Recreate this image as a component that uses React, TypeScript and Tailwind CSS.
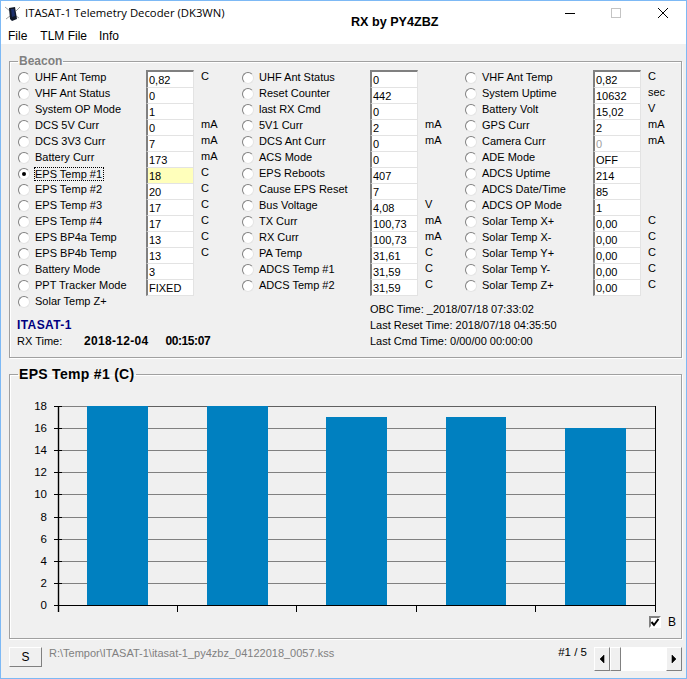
import React from "react";

type Row = { label: string; value: string; unit?: string; selected?: boolean; disabled?: boolean };

const col1: Row[] = [
  { label: "UHF Ant Temp", value: "0,82", unit: "C" },
  { label: "VHF Ant Status", value: "0" },
  { label: "System OP Mode", value: "1" },
  { label: "DCS 5V Curr", value: "0", unit: "mA" },
  { label: "DCS 3V3 Curr", value: "7", unit: "mA" },
  { label: "Battery Curr", value: "173", unit: "mA" },
  { label: "EPS Temp #1", value: "18", unit: "C", selected: true },
  { label: "EPS Temp #2", value: "20", unit: "C" },
  { label: "EPS Temp #3", value: "17", unit: "C" },
  { label: "EPS Temp #4", value: "17", unit: "C" },
  { label: "EPS BP4a Temp", value: "13", unit: "C" },
  { label: "EPS BP4b Temp", value: "13", unit: "C" },
  { label: "Battery Mode", value: "3" },
  { label: "PPT Tracker Mode", value: "FIXED" },
];
const col2: Row[] = [
  { label: "UHF Ant Status", value: "0" },
  { label: "Reset Counter", value: "442" },
  { label: "last RX Cmd", value: "0" },
  { label: "5V1 Curr", value: "2", unit: "mA" },
  { label: "DCS Ant Curr", value: "0", unit: "mA" },
  { label: "ACS Mode", value: "0" },
  { label: "EPS Reboots", value: "407" },
  { label: "Cause EPS Reset", value: "7" },
  { label: "Bus Voltage", value: "4,08", unit: "V" },
  { label: "TX Curr", value: "100,73", unit: "mA" },
  { label: "RX Curr", value: "100,73", unit: "mA" },
  { label: "PA Temp", value: "31,61", unit: "C" },
  { label: "ADCS Temp #1", value: "31,59", unit: "C" },
  { label: "ADCS Temp #2", value: "31,59", unit: "C" },
];
const col3: Row[] = [
  { label: "VHF Ant Temp", value: "0,82", unit: "C" },
  { label: "System Uptime", value: "10632", unit: "sec" },
  { label: "Battery Volt", value: "15,02", unit: "V" },
  { label: "GPS Curr", value: "2", unit: "mA" },
  { label: "Camera Curr", value: "0", unit: "mA", disabled: true },
  { label: "ADE Mode", value: "OFF" },
  { label: "ADCS Uptime", value: "214" },
  { label: "ADCS Date/Time", value: "85" },
  { label: "ADCS OP Mode", value: "1" },
  { label: "Solar Temp X+", value: "0,00", unit: "C" },
  { label: "Solar Temp X-", value: "0,00", unit: "C" },
  { label: "Solar Temp Y+", value: "0,00", unit: "C" },
  { label: "Solar Temp Y-", value: "0,00", unit: "C" },
  { label: "Solar Temp Z+", value: "0,00", unit: "C" },
];

function Radio({ label, selected }: { label: string; selected?: boolean }) {
  return (
    <div className="flex h-4 items-center">
      <span className="flex h-3 w-3 shrink-0 items-center justify-center rounded-full border border-t-[#808080] border-l-[#808080] border-r-[#e4e4e4] border-b-[#e4e4e4] bg-white">
        {selected && <span className="h-1 w-1 rounded-full bg-black" />}
      </span>
      <span className={selected ? "mb-px ml-[4px] border border-dotted border-black pr-px leading-[12px]" : "mb-[2px] ml-[5px] leading-[13px]"}>{label}</span>
    </div>
  );
}

function Column({ rows, width }: { rows: Row[]; width: string }) {
  return (
    <div className={`flex h-[224px] ${width}`}>
      <div className="mt-px w-[128px] shrink-0">
        {rows.map((r) => (
          <Radio key={r.label} label={r.label} selected={r.selected} />
        ))}
      </div>
      <div className="mt-px w-[48px] shrink-0">
        {rows.map((r, i) => (
          <div
            key={r.label}
            className={`${i === 0 ? "h-[18px] border-t-2 border-t-[#808080] pt-px" : "h-4"} flex items-end border-l-2 border-r border-b border-l-[#808080] border-r-[#e3e3e3] border-b-[#e3e3e3] pl-px leading-[14px] ${r.selected ? "bg-[#ffffbb]" : "bg-white"} ${r.disabled ? "text-[#a0a0a0]" : ""}`}
          >
            {r.value}
          </div>
        ))}
      </div>
      <div className="ml-[7px]">
        {rows.map((r) => (
          <div key={r.label} className="h-4 leading-[14px]">
            {r.unit ?? "\u00a0"}
          </div>
        ))}
      </div>
    </div>
  );
}

const bars = [
  { x: 87, w: 61, v: 18 },
  { x: 207, w: 61, v: 18 },
  { x: 326, w: 61, v: 17 },
  { x: 446, w: 60, v: 17 },
  { x: 565, w: 61, v: 16 },
];
const yOf = (v: number) => 605 - (v * 199) / 18;

function Chart() {
  return (
    <svg className="block h-[213px] w-[670px]" viewBox="10 400 670 213" fontFamily="'Liberation Sans', sans-serif" fontSize="11.5">
      {[2, 4, 6, 8, 10, 12, 14, 16, 18].map((v) => (
        <line key={v} x1="58" x2="655" y1={Math.round(yOf(v)) + 0.5} y2={Math.round(yOf(v)) + 0.5} stroke="#808080" />
      ))}
      <line x1="148" x2="655" y1="406.5" y2="406.5" stroke="#606060" />
      {bars.map((b) => (
        <rect key={b.x} x={b.x} y={Math.round(yOf(b.v))} width={b.w} height={605 - Math.round(yOf(b.v))} fill="#0080c0" />
      ))}
      <line x1="58.5" x2="58.5" y1="406" y2="612" stroke="#000" strokeWidth="1.4" />
      <line x1="655.5" x2="655.5" y1="406" y2="612" stroke="#000" />
      <line x1="54" x2="656" y1="605.5" y2="605.5" stroke="#000" />
      {[0, 2, 4, 6, 8, 10, 12, 14, 16, 18].map((v) => (
        <g key={v}>
          <line x1="54" x2="62" y1={Math.round(yOf(v)) + 0.5} y2={Math.round(yOf(v)) + 0.5} stroke="#000" />
          <text x="47" y={Math.round(yOf(v)) + 3.5} textAnchor="end" fill="#000">
            {v}
          </text>
        </g>
      ))}
      {[177.5, 296.5, 416.5, 535.5].map((x) => (
        <line key={x} x1={x} x2={x} y1="605" y2="612" stroke="#000" />
      ))}
    </svg>
  );
}

function ArrowBtn({ dir }: { dir: "l" | "r" }) {
  return (
    <div className="flex h-[24px] w-4 items-center justify-center border border-t-white border-l-white border-r-[#808080] border-b-[#808080] bg-[#f0f0f0]">
      <svg width="6" height="10" viewBox="0 0 6 10">
        <path d={dir === "l" ? "M5 1v8L1 5z" : "M1 1v8l4-4z"} fill="#000" stroke="#000" strokeWidth="0.6" />
      </svg>
    </div>
  );
}

export default function App() {
  return (
    <div className="flex h-[679px] w-[687px] flex-col overflow-hidden border border-[#7db9f5] bg-[#f0f0f0] font-['Liberation_Sans',sans-serif] text-[11px] text-black">
      <header className="flex h-[43px] shrink-0 bg-white">
        <div className="w-[345px] shrink-0">
          <div className="flex h-[24px] items-center pl-1">
            <svg width="15" height="17" viewBox="0 0 15 17">
              <path d="M0 2l5 4M15 2l-4 4M1 14l4-3M14 13l-3-2" stroke="#a0a0a0" strokeWidth="1" />
              <path d="M4 3l6-1 2 12-5 2-2-2z" fill="#101828" />
              <path d="M6 4l3 0 1 7-3 1z" fill="#1c2f6a" />
            </svg>
            <span className="ml-[5px] font-['Open_Sans',sans-serif] text-[11.3px] leading-none">ITASAT-1 Telemetry Decoder (DK3WN)</span>
          </div>
          <nav className="flex h-[20px] items-center pt-px pl-[7px] text-[12px]">
            <span>File</span>
            <span className="ml-[13px]">TLM File</span>
            <span className="ml-[12px]">Info</span>
          </nav>
        </div>
        <div className="ml-[5px] flex items-center text-[12.6px] font-bold">RX by PY4ZBZ</div>
        <div className="ml-auto flex h-[24px] items-center">
          <svg width="12" height="12" viewBox="0 0 12 12" className="mr-[34px]"><path d="M0 6.5h10" stroke="#000" /></svg>
          <svg width="12" height="12" viewBox="0 0 12 12" className="mr-[34px]"><rect x="0.5" y="1.5" width="9" height="9" fill="none" stroke="#c4c4c4" /></svg>
          <svg width="12" height="12" viewBox="0 0 12 12" className="mr-[17px]"><path d="M1 1l10 10M11 1L1 11" stroke="#000" /></svg>
        </div>
      </header>

      <main className="flex flex-1 flex-col px-2">
        <fieldset className="mt-[10px] h-[304px] w-[673px] border border-[#a0a0a0] pl-2 shadow-[inset_1px_1px_0_#fff,1px_1px_0_#fff]">
          <legend className="px-px text-[12px] leading-[14px] font-bold text-[#808080]">Beacon</legend>
          <div className="flex pt-px">
            <Column rows={col1} width="w-[224px]" />
            <Column rows={col2} width="w-[223px]" />
            <Column rows={col3} width="w-[200px]" />
          </div>
          <div className="flex">
            <div className="w-[352px] shrink-0">
              <div className="mt-px">
                <Radio label="Solar Temp Z+" />
              </div>
              <div className="mt-[7px] -ml-px text-[12px] leading-4 font-bold tracking-[0.4px] text-[#000080]">ITASAT-1</div>
              <div className="-ml-px flex leading-4">
                <span className="w-[67px]">RX Time:</span>
                <span className="text-[12px] font-bold tracking-[0.3px]">2018-12-04</span>
                <span className="ml-[17px] text-[12px] font-bold tracking-[-0.4px]">00:15:07</span>
              </div>
            </div>
            <div className="pt-[8px] leading-4">
              <div>OBC Time: _2018/07/18 07:33:02</div>
              <div>Last Reset Time: 2018/07/18 04:35:50</div>
              <div>Last Cmd Time: 0/00/00 00:00:00</div>
            </div>
          </div>
        </fieldset>

        <fieldset className="mt-[7px] h-[274px] w-[673px] border border-[#a0a0a0] shadow-[inset_1px_1px_0_#fff,1px_1px_0_#fff]">
          <legend className="ml-2 px-px text-[14px] leading-[18px] font-bold tracking-[0.3px]">EPS Temp #1 (C)</legend>
          <div className="mt-[17px]">
            <Chart />
          </div>
          <div className="flex h-[20px] items-start justify-end pr-[5px]">
            <span className="mt-[3px] flex h-3 w-3 items-center justify-center border-2 border-t-[#808080] border-l-[#808080] border-r-white border-b-white bg-white">
              <svg width="10" height="10" viewBox="0 0 10 10" className="shrink-0"><path d="M1.5 5l2.5 3 4.5-6" fill="none" stroke="#000" strokeWidth="2" /></svg>
            </span>
            <span className="mt-[2px] ml-[7px] text-[12px] leading-[14px]">B</span>
          </div>
        </fieldset>

        <div className="mt-[8px] flex items-start">
          <button className="flex h-[20px] w-[33px] items-center justify-center border border-t-white border-l-white border-r-[#808080] border-b-[#808080] bg-[#f0f0f0] text-[12px]">S</button>
          <span className="ml-[7px] -mt-px leading-[14px] text-[#808080]">R:\Tempor\ITASAT-1\itasat-1_py4zbz_04122018_0057.kss</span>
          <span className="ml-auto -mt-[2px] text-[11.5px] leading-[14px]">#1 / 5</span>
          <div className="-mr-[4px] ml-[7px] flex h-[24px] w-[88px]">
            <ArrowBtn dir="l" />
            <div className="w-[11px] border border-t-white border-l-white border-r-[#808080] border-b-[#808080] bg-[#f0f0f0]" />
            <div className="flex-1 bg-white" />
            <ArrowBtn dir="r" />
          </div>
        </div>
      </main>
    </div>
  );
}
